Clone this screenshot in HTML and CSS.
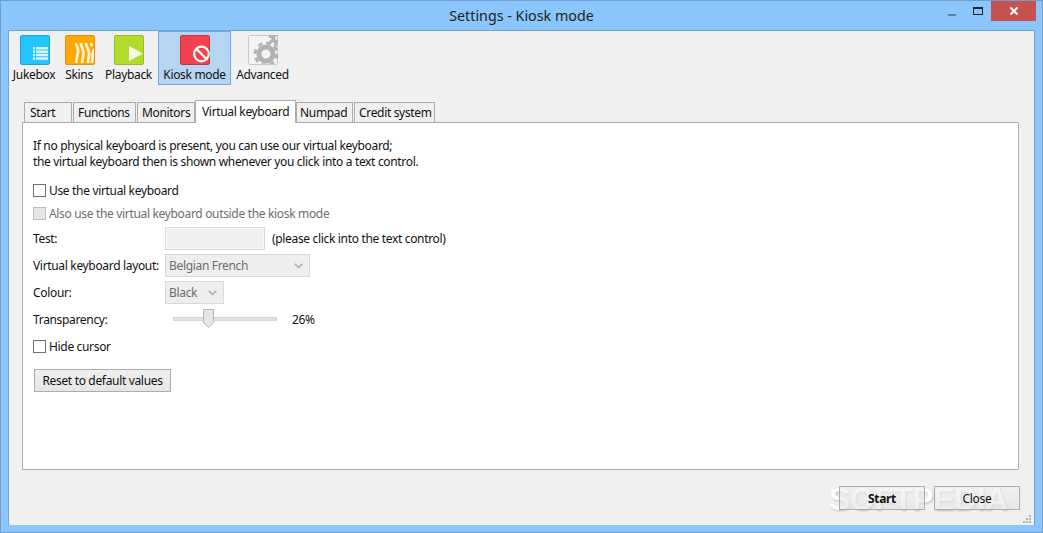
FILE: index.html
```html
<!DOCTYPE html>
<html lang="en">
<head>
<meta charset="utf-8">
<title>Settings - Kiosk mode</title>
<link rel="stylesheet" href="styles.css">
</head>
<body>
<div class="window">
  <header class="titlebar">
    <div class="title">Settings - Kiosk mode</div>
    <div class="controls">
      <div class="ctl ctl-min"><span class="min-glyph"></span></div>
      <div class="ctl ctl-max"><span class="max-glyph"></span></div>
      <div class="ctl ctl-close">
        <svg width="8" height="8" viewBox="0 0 8 8"><path d="M0.5 0.5L7.5 7.5M7.5 0.5L0.5 7.5" stroke="#fff" stroke-width="2" fill="none"/></svg>
      </div>
    </div>
  </header>
  <div class="client">
    <nav class="toolbar">
      <div class="tool tool-jukebox">
        <svg class="icon" viewBox="0 0 30 30"><rect x=".5" y=".5" width="29" height="29" rx="1.5" fill="#22C5FE" stroke="#1aa3dc"/><path d="M13 12h2v2.500h-2zM16 12h12v2.500H16zM13 15.400h2v2.500h-2zM16 15.400h12v2.500H16zM13 18.800h2v2.500h-2zM16 18.800h12v2.500H16zM13 22.200h2v2.500h-2zM16 22.200h12v2.500H16z" fill="#d8f5ff"/></svg>
        <span>Jukebox</span>
      </div>
      <div class="tool tool-skins">
        <svg class="icon" viewBox="0 0 30 30"><defs><clipPath id="zebra"><rect x="10" y="8" width="19" height="20"/></clipPath></defs><rect x=".5" y=".5" width="29" height="29" rx="1.5" fill="#FFA800" stroke="#ee8c10"/><g clip-path="url(#zebra)" fill="none" stroke="#fff3d8" stroke-width="2.700"><path d="M10 8c2 3 4 5 3 9l-2 11"/><path d="M16 7c-1 4 3 7 2.500 12-.3 3-1.500 6-1.500 10"/><path d="M21 7c-1 4 4 7 3 13-.4 3-1 6-1 9"/><path d="M26 7c0 2 .5 3 1.500 4"/><path d="M30 14c-2 2-2.500 4-2.500 7l-.5 8"/></g></svg>
        <span>Skins</span>
      </div>
      <div class="tool tool-playback">
        <svg class="icon" viewBox="0 0 30 30"><rect x=".5" y=".5" width="29" height="29" rx="1.5" fill="#B2DB2B" stroke="#95bd24"/><path d="M15 11L29 18.500 15 26z" fill="#f6fbe2"/></svg>
        <span>Playback</span>
      </div>
      <div class="tool tool-kiosk">
        <svg class="icon" viewBox="0 0 30 30"><rect x=".5" y=".5" width="29" height="29" rx="1.5" fill="#F4414F" stroke="#c8303c"/><circle cx="21.500" cy="19" r="7.300" fill="none" stroke="#fff" stroke-width="2.200"/><path d="M16.500 14l10 10" stroke="#fff" stroke-width="2.200"/></svg>
        <span>Kiosk mode</span>
      </div>
      <div class="tool tool-advanced">
        <svg class="icon" viewBox="0 0 30 30"><defs><clipPath id="gearclip"><rect x="0" y="0" width="30" height="29"/></clipPath></defs><rect x=".5" y=".5" width="29" height="29" rx="1.500" fill="#f3f3f3" stroke="#c8c8c8"/><g clip-path="url(#gearclip)" fill="none" stroke="#b2b2b2"><circle cx="18" cy="19" r="7" stroke-width="5"/><circle cx="18" cy="19" r="11" stroke-width="3" stroke-dasharray="4.600 4.040"/><circle cx="29" cy="3" r="4" stroke-width="4"/><circle cx="29" cy="3" r="7" stroke-width="2.500" stroke-dasharray="3 2.500"/></g></svg>
        <span>Advanced</span>
      </div>
    </nav>
    <div class="tabs">
      <div class="tab tab-start">Start</div>
      <div class="tab tab-functions">Functions</div>
      <div class="tab tab-monitors">Monitors</div>
      <div class="tab tab-active">Virtual keyboard</div>
      <div class="tab tab-numpad">Numpad</div>
      <div class="tab tab-credit">Credit system</div>
    </div>
    <main class="panel">
      <p class="intro">If no physical keyboard is present, you can use our virtual keyboard;<br>the virtual keyboard then is shown whenever you click into a text control.</p>
      <div class="check-row first"><span class="box"></span><span>Use the virtual keyboard</span></div>
      <div class="check-row second disabled"><span class="box"></span><span>Also use the virtual keyboard outside the kiosk mode</span></div>
      <div class="field test"><label>Test:</label><div class="textbox"></div><span class="hint">(please click into the text control)</span></div>
      <div class="field layout"><label>Virtual keyboard layout:</label>
        <div class="select select-wide">Belgian French<svg class="chev" width="9" height="6" viewBox="0 0 9 6"><path d="M.7.7l3.800 3.800L8.300.7" fill="none" stroke="#a8a8a8" stroke-width="1.500"/></svg></div>
      </div>
      <div class="field colour"><label>Colour:</label>
        <div class="select select-narrow">Black<svg class="chev" width="9" height="6" viewBox="0 0 9 6"><path d="M.7.7l3.800 3.800L8.300.7" fill="none" stroke="#a8a8a8" stroke-width="1.500"/></svg></div>
      </div>
      <div class="field transparency"><label>Transparency:</label>
        <div class="slider"><div class="track"></div>
          <svg class="thumb" width="11" height="19" viewBox="0 0 11 19"><path d="M.5.5h10v13l-5 5-5-5z" fill="#e6e6e6" stroke="#b4b4b4"/></svg>
        </div>
        <span class="value">26%</span>
      </div>
      <div class="check-row third"><span class="box"></span><span>Hide cursor</span></div>
      <button class="btn reset">Reset to default values</button>
    </main>
    <footer class="footer">
      <button class="btn action primary">Start</button>
      <button class="btn action">Close</button>
    </footer>
    <div class="watermark">SOFTPEDIA</div>
    <svg class="grip" width="8" height="8" viewBox="0 0 8 8"><path d="M6 0h2v2H6zM3 3h2v2H3zM6 3h2v2H6zM0 6h2v2H0zM3 6h2v2H3zM6 6h2v2H6z" fill="#b4b4b4"/></svg>
  </div>
</div>
</body>
</html>
```

FILE: styles.css
```css
* { box-sizing: border-box; }
html, body { margin: 0; padding: 0; }
body {
  width: 1043px;
  height: 533px;
  overflow: hidden;
  font-family: "Noto Sans", "Liberation Sans", sans-serif;
  font-size: 12px;
  letter-spacing: -0.33px;
  color: #111;
}
.window {
  width: 1043px;
  height: 533px;
  background: #8AC6FB;
  border: 1px solid #6E9FD1;
  display: flex;
  flex-direction: column;
  padding: 0 7px 7px;
}
.titlebar {
  height: 29px;
  flex: none;
  position: relative;
  margin: 0 -7px;
}
.title {
  text-align: center;
  font-size: 14.300px;
  letter-spacing: 0;
  line-height: 30px;
  color: #222;
}
.controls {
  position: absolute;
  right: 6px;
  top: 0;
  display: flex;
  height: 20px;
}
.ctl { display: flex; align-items: center; justify-content: center; height: 20px; }
.ctl-min { width: 26px; }
.ctl-max { width: 26px; }
.ctl-close { width: 45px; background: #C75050; }
.min-glyph { display: block; width: 8px; height: 2px; background: #5E7F9E; margin-top: 7px; }
.max-glyph { display: block; width: 10px; height: 8px; border: 1px solid #222; border-top-width: 2px; }
.client {
  flex: 1;
  position: relative;
  background: #F0F0F0;
  border: 1px solid #6FA4D8;
  border-bottom: 0;
  display: flex;
  flex-direction: column;
  min-height: 0;
}
.toolbar {
  display: flex;
  height: 54px;
  flex: none;
}
.tool {
  display: flex;
  flex-direction: column;
  align-items: center;
  height: 54px;
  padding-top: 4px;
  white-space: nowrap;
  font-size: 12px;
}
.tool span { line-height: 16px; margin-top: 2px; }
.icon { width: 30px; height: 30px; display: block; flex: none; }
.tool-jukebox span { margin-right: 2px; }
.tool-skins span { margin-right: 2px; }
.tool-jukebox { width: 52px; }
.tool-skins { width: 38px; }
.tool-playback { width: 59px; }
.tool-kiosk { width: 73px; background: #B5D5F3; border: 1px solid #6FA8DC; padding-top: 3px; }
.tool-advanced { width: 63px; }
.tabs {
  display: flex;
  align-items: flex-end;
  height: 37px;
  flex: none;
  padding-left: 15px;
  position: relative;
  z-index: 1;
}
.tab {
  height: 20px;
  line-height: 20px;
  background: #F0F0F0;
  border: 1px solid #ACACAC;
  border-bottom: 0;
  margin-right: 1px;
  padding-left: 4px;
  white-space: nowrap;
}
.tab-start { width: 48px; padding-left: 5px; }
.tab-functions { width: 63px; }
.tab-monitors { width: 58px; margin-right: 0; }
.tab-active {
  width: 101px;
  height: 23px;
  background: #fff;
  margin-right: 0;
  margin-bottom: -1px;
  padding-left: 6px;
  line-height: 21px;
}
.tab-numpad { width: 57px; padding-left: 3px; }
.tab-credit { width: 81px; margin-right: 0; }
.panel {
  flex: none;
  width: 997px;
  height: 348px;
  margin-left: 13px;
  background: #fff;
  border: 1px solid #ACACAC;
  padding: 0 0 0 10px;
  display: flex;
  flex-direction: column;
  align-items: flex-start;
}
.intro { margin: 15px 0 0; line-height: 16px; }
.check-row { display: flex; align-items: center; gap: 3px; height: 16px; white-space: nowrap; }
.check-row.first { margin-top: 12px; }
.check-row.second { margin-top: 7px; }
.check-row.third { margin-top: 7px; }
.box { display: block; width: 13px; height: 13px; border: 1px solid #707070; background: #fff; flex: none; }
.disabled { color: #6d6d6d; }
.disabled .box { background: #E6E6E6; border-color: #BCBCBC; }
.field { display: flex; align-items: center; white-space: nowrap; }
.field label { width: 132px; flex: none; }
.field.test { margin-top: 6px; height: 23px; }
.field.layout { margin-top: 4px; height: 23px; }
.field.colour { margin-top: 4px; height: 23px; }
.field.transparency { margin-top: 3px; height: 24px; }
.textbox { width: 100px; height: 23px; background: #F0F0F0; border: 1px solid #D9D9D9; box-shadow: inset 0 0 0 1px #f8f8f8; }
.hint { margin-left: 7px; }
.select {
  height: 23px;
  display: flex;
  align-items: center;
  justify-content: space-between;
  background: #EEEEEE;
  border: 1px solid #D9D9D9;
  color: #6d6d6d;
  padding: 0 6px 0 3px;
}
.select-wide { width: 145px; }
.select-narrow { width: 59px; }
.slider { width: 104px; margin-left: 8px; height: 24px; position: relative; display: flex; align-items: center; }
.track { width: 104px; height: 4px; background: #E2E2E2; border: 1px solid #D6D6D6; }
.thumb { position: absolute; left: 30px; top: 2px; }
.value { margin-left: 15px; }
.btn {
  font-family: inherit;
  font-size: 12px;
  letter-spacing: inherit;
  color: #111;
  background: linear-gradient(rgba(240, 240, 240, 0.6), rgba(225, 225, 225, 0.6));
  border: 1px solid #ACACAC;
  padding: 0;
  height: 23px;
}
.reset { width: 137px; margin-top: 15px; margin-left: 1px; background: linear-gradient(#F0F0F0, #E5E5E5); }
.footer {
  display: flex;
  justify-content: flex-end;
  gap: 9px;
  padding: 16px 14px 0 0;
  flex: none;
  position: relative;
  z-index: 1;
}
.action { width: 86px; height: 24px; }
.primary { font-weight: 700; }
.watermark {
  position: absolute;
  left: 820px;
  top: 451px;
  font-family: "Liberation Sans", sans-serif;
  font-weight: 700;
  font-size: 32px;
  line-height: 34px;
  letter-spacing: -0.5px;
  color: #fff;
  text-shadow: 1px 1px 2px rgba(110, 110, 110, 0.4);
  pointer-events: none;
}
.grip { position: absolute; right: 3px; bottom: 2px; }
```
